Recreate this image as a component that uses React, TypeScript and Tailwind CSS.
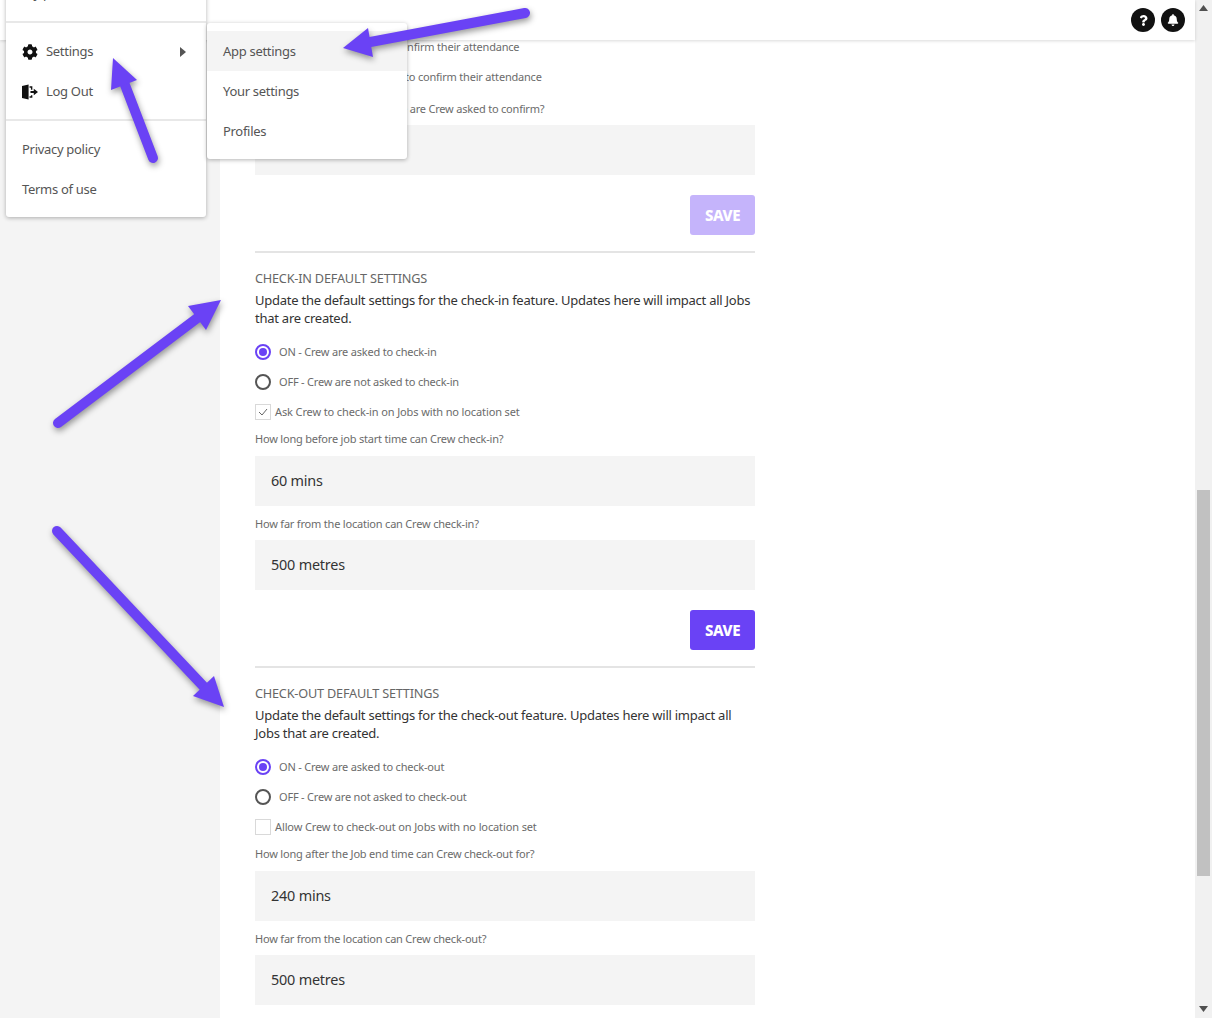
import { FaBell, FaCog, FaQuestion } from 'react-icons/fa'

const font = "font-['Noto_Sans',sans-serif]"

function Radio({ on, label }: { on?: boolean; label: string }) {
  return (
    <div className="h-[30px] flex items-center">
      <span
        className={`w-4 h-4 rounded-full border-2 flex items-center justify-center ${on ? 'border-[#6a42f5]' : 'border-[#555555]'}`}
      >
        {on && <span className="w-2 h-2 rounded-full bg-[#6a42f5]" />}
      </span>
      <span className="ml-2 text-[11px] tracking-[-0.2px] text-[#6b6b6b]">{label}</span>
    </div>
  )
}

function Check({ on, label }: { on?: boolean; label: string }) {
  return (
    <div className="h-[30px] flex items-center">
      <span className="w-4 h-4 border border-[#d9d9d9] flex items-center justify-center">
        {on && (
          <svg width="10" height="8" viewBox="0 0 10 8" fill="none" stroke="#666666" strokeWidth="1">
            <path d="M1 4l3 3 5-6" />
          </svg>
        )}
      </span>
      <span className="ml-1 text-[11px] tracking-[-0.12px] text-[#6b6b6b]">{label}</span>
    </div>
  )
}

function FieldLabel({ text, className }: { text: string; className: string }) {
  return <div className={`h-4 leading-4 text-[11px] tracking-[-0.2px] text-[#6b6b6b] ${className}`}>{text}</div>
}

function Input({ value, className }: { value?: string; className: string }) {
  return (
    <div className={`h-[50px] bg-[#f4f4f4] pl-4 pb-[1px] flex items-center text-[14.4px] tracking-[-0.2px] text-[#333333] ${className}`}>
      {value}
    </div>
  )
}

function Save({ disabled }: { disabled?: boolean }) {
  return (
    <div className="flex justify-end mt-5">
      <div
        className={`w-[65px] h-10 rounded-[3px] flex items-center justify-center text-white font-extrabold text-[15px] tracking-[-0.4px] ${disabled ? 'bg-[#c5b4fb]' : 'bg-[#6a42f5]'}`}
      >
        SAVE
      </div>
    </div>
  )
}

function Section(props: {
  title: string
  description: string
  on: string
  off: string
  check: string
  checked?: boolean
  q1: string
  v1: string
  q2: string
  v2: string
}) {
  return (
    <div>
      <div className="h-[2px] bg-[#e4e4e4] mt-4" />
      <div className="mt-4 h-[18px] leading-[18px] text-[12.7px] tracking-[-0.2px] text-[#666666]">{props.title}</div>
      <div className="mt-1 leading-[18px] text-[13px] tracking-[-0.25px] text-[#333333]">{props.description}</div>
      <div className="mt-[10px]">
        <Radio on label={props.on} />
        <Radio label={props.off} />
        <Check on={props.checked} label={props.check} />
      </div>
      <FieldLabel text={props.q1} className="mt-1" />
      <Input value={props.v1} className="mt-[9px]" />
      <FieldLabel text={props.q2} className="mt-[10px]" />
      <Input value={props.v2} className="mt-2" />
    </div>
  )
}

function MenuItem({ children, hover }: { children: React.ReactNode; hover?: boolean }) {
  return (
    <div className={`h-10 pt-[2px] flex items-center px-4 text-[13px] tracking-[-0.3px] text-[#555555] ${hover ? 'bg-[#f4f4f4]' : ''}`}>
      {children}
    </div>
  )
}

function LogoutIcon() {
  return (
    <svg width="16" height="16" viewBox="0 0 17 16" fill="#111111">
      <path d="M0 1.500L7 0v16l-7-1.500zM8 2h3v3.500H9.500V3.500H8zM8 12.500h1.500v-1H11V14H8z" />
      <path d="M9 7h3.500V4.500L17 8l-4.500 3.500V9H9z" />
    </svg>
  )
}

function Arrow({ tail, neck, head }: { tail: [number, number]; neck: [number, number]; head: string }) {
  return (
    <>
      <line x1={tail[0]} y1={tail[1]} x2={neck[0]} y2={neck[1]} stroke="#6a42f5" strokeWidth="10" strokeLinecap="round" />
      <polygon points={head} fill="#6a42f5" />
    </>
  )
}

export default function App() {
  return (
    <div className={`relative w-[1212px] h-[1018px] overflow-hidden bg-white flex ${font}`}>
      <div className="w-[1195px] h-full flex flex-col">
        <header className="relative z-10 h-10 shrink-0 bg-white shadow-[0_1px_3px_rgba(0,0,0,0.15)] flex items-center justify-end gap-[6px] pr-[10px]">
          <span className="w-6 h-6 rounded-full bg-[#111111] text-white flex items-center justify-center">
            <FaQuestion size={11} />
          </span>
          <span className="w-6 h-6 rounded-full bg-[#111111] text-white flex items-center justify-center">
            <FaBell size={12} />
          </span>
        </header>
        <div className="flex flex-1 min-h-0">
          <aside className="w-[220px] bg-[#f4f4f4]" />
          <main className="flex-1 overflow-hidden pl-[35px]">
            <div className="w-[500px] -mt-2">
              <Radio on label="ON - Crew are asked to confirm their attendance" />
              <Radio label="OFF - Crew are not asked to confirm their attendance" />
              <FieldLabel text="How long before job start time are Crew asked to confirm?" className="mt-[9px]" />
              <Input className="mt-2" />
              <Save disabled />
              <Section
                title="CHECK-IN DEFAULT SETTINGS"
                description="Update the default settings for the check-in feature. Updates here will impact all Jobs that are created."
                on="ON - Crew are asked to check-in"
                off="OFF - Crew are not asked to check-in"
                check="Ask Crew to check-in on Jobs with no location set"
                checked
                q1="How long before job start time can Crew check-in?"
                v1="60 mins"
                q2="How far from the location can Crew check-in?"
                v2="500 metres"
              />
              <Save />
              <Section
                title="CHECK-OUT DEFAULT SETTINGS"
                description="Update the default settings for the check-out feature. Updates here will impact all Jobs that are created."
                on="ON - Crew are asked to check-out"
                off="OFF - Crew are not asked to check-out"
                check="Allow Crew to check-out on Jobs with no location set"
                q1="How long after the Job end time can Crew check-out for?"
                v1="240 mins"
                q2="How far from the location can Crew check-out?"
                v2="500 metres"
              />
            </div>
          </main>
        </div>
      </div>

      {/* browser scrollbar */}
      <div className="w-[17px] h-full bg-[#f1f1f1] flex flex-col items-center">
        <svg className="mt-[5px]" width="9" height="6" viewBox="0 0 9 6" fill="#505050">
          <path d="M4.500 0L9 6H0z" />
        </svg>
        <div className="w-[13px] h-[386px] mt-[479px] bg-[#c1c1c1]" />
        <svg className="mt-auto mb-[6px]" width="9" height="6" viewBox="0 0 9 6" fill="#505050">
          <path d="M0 0h9L4.500 6z" />
        </svg>
      </div>

      {/* user menu */}
      <div className="absolute z-20 left-[6px] top-[-27px] w-[200px] bg-white rounded-[3px] shadow-[0_1px_4px_rgba(0,0,0,0.3)]">
        <MenuItem>My profile</MenuItem>
        <div className="h-[2px] bg-[#e8e8e8] my-2" />
        <MenuItem>
          <FaCog size={16} color="#111111" className="mr-2" />
          <span className="flex-1">Settings</span>
          <svg className="mr-1" width="6" height="10" viewBox="0 0 6 10" fill="#555555">
            <path d="M0 0l6 5-6 5z" />
          </svg>
        </MenuItem>
        <MenuItem>
          <span className="mr-2">
            <LogoutIcon />
          </span>
          Log Out
        </MenuItem>
        <div className="h-[2px] bg-[#e8e8e8] my-2" />
        <MenuItem>Privacy policy</MenuItem>
        <MenuItem>Terms of use</MenuItem>
        <div className="h-2" />
      </div>

      {/* settings submenu */}
      <div className="absolute z-20 left-[207px] top-[23px] w-[200px] py-2 bg-white rounded-[3px] shadow-[0_1px_4px_rgba(0,0,0,0.3)]">
        <MenuItem hover>App settings</MenuItem>
        <MenuItem>Your settings</MenuItem>
        <MenuItem>Profiles</MenuItem>
      </div>

      {/* annotation arrows */}
      <svg
        className="absolute z-30 left-0 top-0 drop-shadow-[1px_3px_3px_rgba(0,0,0,0.4)]"
        width="1212"
        height="1018"
        viewBox="0 0 1212 1018"
      >
        <Arrow tail={[153, 158]} neck={[125, 85]} head="113,58 137,80 111,90" />
        <Arrow tail={[525, 13]} neck={[365, 43]} head="343,48 368,28 373,57" />
        <Arrow tail={[58, 423]} neck={[200, 316]} head="221,300 188,306 206,330" />
        <Arrow tail={[57, 531]} neck={[205, 688]} head="224,707 214,676 193,696" />
      </svg>
    </div>
  )
}
